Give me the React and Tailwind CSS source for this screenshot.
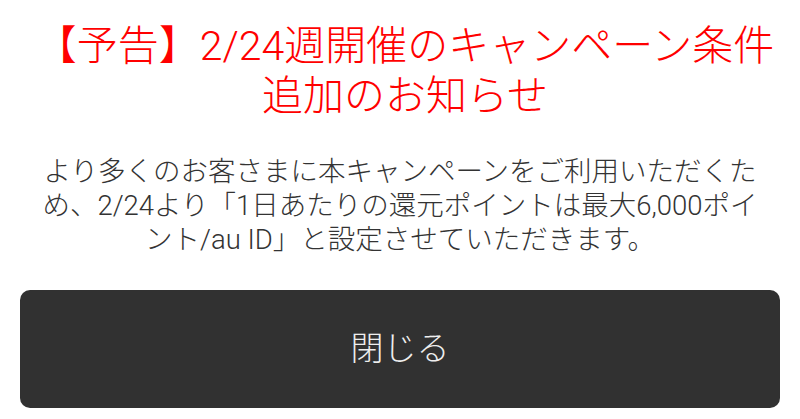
import React from 'react';

const font = { fontFamily: 'Roboto, "Noto Sans CJK JP", sans-serif' };

const App = () => {
  return (
    <div className="w-[800px] h-[419px] bg-white overflow-hidden" style={font}>
      <div className="flex flex-col items-center pt-[21px] px-[22px]">
        {/* Title */}
        <h1 className="pl-[10px] text-[41px] font-light leading-[50px] text-[#ff0000] text-center whitespace-nowrap">
          【予告】2/24週開催のキャンペーン条件
          <br />
          追加のお知らせ
        </h1>

        {/* Body */}
        <p className="mt-[34px] text-[27.5px] font-light leading-[34px] text-[#333333] text-center whitespace-nowrap">
          より多くのお客さまに本キャンペーンをご利用いただくた
          <br />
          め、2/24より「1日あたりの還元ポイントは最大6,000ポイ
          <br />
          ント/au ID」と設定させていただきます。
        </p>

        {/* Close button */}
        <button className="mt-[33px] w-[760px] h-[118px] rounded-[10px] bg-[#313131] text-[#eeeeee] text-[33px] font-light flex items-center justify-center">
          閉じる
        </button>
      </div>
    </div>
  );
};

export default App;
